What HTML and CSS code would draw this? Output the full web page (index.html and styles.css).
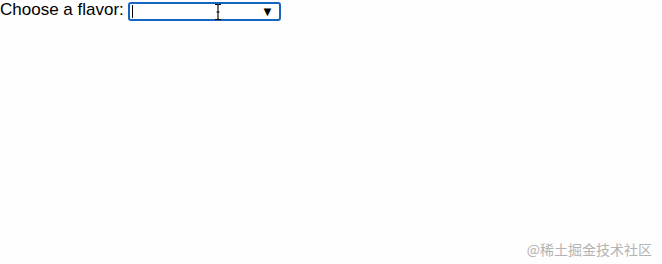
FILE: index.html
```html
<!DOCTYPE html>
<html lang="en">
<head>
<meta charset="utf-8">
<title>Choose a flavor</title>
<link rel="stylesheet" href="styles.css">
</head>
<body>
<div class="row">
  <label class="label">Choose a flavor:</label>
  <div class="field">
    <span class="caret"></span>
    <span class="arrow">&#9660;</span>
  </div>
</div>
<svg class="ibeam" width="10" height="18" viewBox="0 0 10 18" aria-hidden="true">
  <path d="M2 1.5 H4 Q5 1.5 5 3 Q5 1.5 6 1.5 H8 M5 3 V15 M2 16.5 H4 Q5 16.5 5 15 Q5 16.5 6 16.5 H8 M3.5 9 H6.5" fill="none" stroke="#000" stroke-width="1.1"/>
</svg>
<div class="watermark">@稀土掘金技术社区</div>
</body>
</html>
```
FILE: styles.css
```css
html, body {
  margin: 0;
  padding: 0;
  background: #fefefe;
}
body {
  width: 662px;
  height: 264px;
  position: relative;
  overflow: hidden;
  font-family: "Liberation Sans", Arial, sans-serif;
  font-size: 17px;
  color: #000;
}
.row {
  display: flex;
  align-items: flex-start;
  gap: 4px;
}
.label {
  line-height: 20px;
}
.field {
  margin-top: 2px;
  box-sizing: border-box;
  width: 153px;
  height: 19px;
  border: 2px solid #1565c0;
  border-radius: 3px;
  display: flex;
  align-items: center;
  padding: 0 5px 0 2px;
  background: #fff;
}
.caret {
  width: 1px;
  height: 13px;
  background: #000;
}
.arrow {
  margin-left: auto;
  font-size: 13px;
  line-height: 1;
}
.ibeam {
  position: absolute;
  left: 213px;
  top: 3px;
}
.watermark {
  position: absolute;
  right: 10px;
  top: 240px;
  font-family: "Noto Sans CJK SC", sans-serif;
  font-size: 14px;
  line-height: 18px;
  color: #b3b3b3;
}
```
